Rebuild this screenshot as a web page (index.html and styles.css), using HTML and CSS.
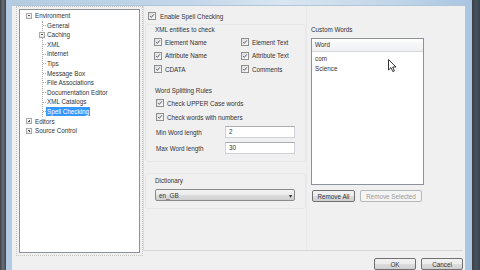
FILE: index.html
```html
<!DOCTYPE html>
<html lang="en">
<head>
    <meta charset="UTF-8">
    <meta name="viewport" content="width=device-width, initial-scale=1.0">
    <title>Options</title>
    <link rel="stylesheet" href="styles.css">
</head>
<body>
    <div class="frame">
        <div class="titlebar"></div>
        <div class="dialog">
            <!-- left tree -->
            <div class="tree">
                <div class="node"><span class="exp minus"></span>Environment</div>
                <div class="children">
                    <div class="leaf">General</div>
                    <div class="leaf branch"><span class="exp minus"></span>Caching</div>
                    <div class="leaf">XML</div>
                    <div class="leaf">Internet</div>
                    <div class="leaf">Tips</div>
                    <div class="leaf">Message Box</div>
                    <div class="leaf">File Associations</div>
                    <div class="leaf">Documentation Editor</div>
                    <div class="leaf">XML Catalogs</div>
                    <div class="leaf last"><span class="selected">Spell Checking</span></div>
                </div>
                <div class="node"><span class="exp plus"></span>Editors</div>
                <div class="node"><span class="exp plus"></span>Source Control</div>
            </div>

            <div class="side">
                <div class="panel">
                    <div class="col-left">
                        <div class="check enable"><span class="cb"><svg viewBox="0 0 8 8"><path d="M1.6 4.1 L3.2 5.8 L6.4 1.8" /></svg></span>Enable Spell Checking</div>

                        <div class="group entities">
                            <div class="legend">XML entities to check</div>
                            <div class="grid">
                                <div class="check"><span class="cb"><svg viewBox="0 0 8 8"><path d="M1.6 4.1 L3.2 5.8 L6.4 1.8" /></svg></span>Element Name</div>
                                <div class="check"><span class="cb"><svg viewBox="0 0 8 8"><path d="M1.6 4.1 L3.2 5.8 L6.4 1.8" /></svg></span>Element Text</div>
                                <div class="check"><span class="cb"><svg viewBox="0 0 8 8"><path d="M1.6 4.1 L3.2 5.8 L6.4 1.8" /></svg></span>Attribute Name</div>
                                <div class="check"><span class="cb"><svg viewBox="0 0 8 8"><path d="M1.6 4.1 L3.2 5.8 L6.4 1.8" /></svg></span>Attribute Text</div>
                                <div class="check"><span class="cb"><svg viewBox="0 0 8 8"><path d="M1.6 4.1 L3.2 5.8 L6.4 1.8" /></svg></span>CDATA</div>
                                <div class="check"><span class="cb"><svg viewBox="0 0 8 8"><path d="M1.6 4.1 L3.2 5.8 L6.4 1.8" /></svg></span>Comments</div>
                            </div>
                            <div class="legend split">Word Splitting Rules</div>
                            <div class="check rule first"><span class="cb"><svg viewBox="0 0 8 8"><path d="M1.6 4.1 L3.2 5.8 L6.4 1.8" /></svg></span>Check UPPER Case words</div>
                            <div class="check rule"><span class="cb"><svg viewBox="0 0 8 8"><path d="M1.6 4.1 L3.2 5.8 L6.4 1.8" /></svg></span>Check words with numbers</div>
                            <div class="field"><span class="label">Min Word length</span><span class="textbox">2</span></div>
                            <div class="field"><span class="label">Max Word length</span><span class="textbox">30</span></div>
                        </div>

                        <div class="group dict">
                            <div class="legend">Dictionary</div>
                            <div class="combo"><span>en_GB</span><span class="arrow">&#9662;</span></div>
                        </div>
                    </div>

                    <div class="col-right">
                        <div class="legend custom">Custom Words</div>
                        <div class="list">
                            <div class="list-head">Word</div>
                            <div class="item first">com</div>
                            <div class="item">Science</div>
                            <svg class="cursor" viewBox="0 0 9 14" width="9" height="14">
                                <path d="M0.5 0.5 L0.5 11 L3 8.6 L4.8 12.6 L6.4 11.9 L4.7 8 L8 8 Z" fill="#fff" stroke="#222" stroke-width="0.9" />
                            </svg>
                        </div>
                        <div class="list-buttons">
                            <span class="btn remove-all">Remove All</span>
                            <span class="btn disabled">Remove Selected</span>
                        </div>
                    </div>
                </div>

                <div class="footer">
                    <span class="btn ok">OK</span>
                    <span class="btn cancel">Cancel</span>
                </div>
            </div>
        </div>
    </div>
</body>
</html>
```

FILE: styles.css
```css
* {
    font-family: 'Liberation Sans', Arial, sans-serif;
    box-sizing: border-box;
}

body {
    margin: 0;
    width: 480px;
    height: 270px;
    overflow: hidden;
    background: linear-gradient(90deg, #3c3f44 0px, #6d7177 3px, #3e4146 6px, #3e4146 472px, #46525f 476px, #3a4450 480px);
    font-size: 6.3px;
    color: #333;
}

.frame {
    margin-left: 6px;
    width: 466px;
    height: 270px;
    display: flex;
    flex-direction: column;
    padding: 0 7px 0 6px;
    background: linear-gradient(90deg, #b3cbe2, #c3d7ea 40%, #d8e6f2 60%, #bfd4e8 85%, #a9c5e2);
}

.titlebar {
    height: 8px;
}

.dialog {
    flex: 1;
    display: flex;
    background: #f0f0f0;
    border-top: 1px solid #b4c5d6;
}

/* tree */

.tree {
    margin: 3px 0 0 7px;
    width: 121px;
    height: 244px;
    background: #fff;
    border: 1px solid #8d9199;
    outline: 1px dotted #c4c4c4;
    outline-offset: 2px;
    padding-top: 1px;
    line-height: 9.6px;
}

.node {
    display: flex;
    align-items: center;
    height: 9.6px;
    padding-left: 6px;
}

.exp {
    position: relative;
    width: 6px;
    height: 6px;
    margin-right: 3px;
    border: 1px solid #a8a8a8;
    background: linear-gradient(#fff, #e6e6e6);
    flex: none;
}

.exp::before {
    content: "";
    position: absolute;
    left: 1px;
    top: 1.5px;
    width: 2px;
    height: 1px;
    background: #555;
}

.exp.plus::after {
    content: "";
    position: absolute;
    left: 1.5px;
    top: 1px;
    width: 1px;
    height: 2px;
    background: #555;
}

.children {
    margin-left: 22px;
    border-left: 1px dotted #a8a8a8;
}

.leaf {
    display: flex;
    align-items: center;
    height: 9.6px;
}

.leaf::before {
    content: "";
    width: 3px;
    margin-right: 1px;
    border-top: 1px dotted #a8a8a8;
}

.leaf.branch::before {
    display: none;
}

.leaf.branch .exp {
    margin-left: -4px;
    margin-right: 2px;
}

.selected {
    background: #3399ff;
    color: #fff;
    padding: 0 1px;
    margin-left: -1px;
    line-height: 9px;
}

/* right side */

.side {
    margin-left: 3px;
    width: 320px;
    display: flex;
    flex-direction: column;
}

.panel {
    height: 245px;
    display: flex;
    border-left: 1px solid #dddddd;
    border-bottom: 1px solid #d6d6d6;
}

.col-left {
    width: 162px;
}

.check {
    display: flex;
    align-items: center;
    height: 10px;
    white-space: nowrap;
}

.cb {
    width: 8px;
    height: 8px;
    margin-right: 3px;
    border: 1px solid #8e8f8f;
    background: linear-gradient(135deg, #dcdcdc, #fafafa);
    flex: none;
}

.cb svg {
    display: block;
    width: 6px;
    height: 6px;
}

.cb path {
    fill: none;
    stroke: #46506a;
    stroke-width: 1.2;
}

.enable {
    margin-top: 5px;
    padding-left: 4px;
}

.enable .cb {
    margin-right: 4px;
}

.group {
    margin-left: 1px;
    width: 161px;
    border: 1px solid #e7e7e7;
    border-radius: 3px;
}

.legend {
    height: 10px;
    line-height: 10px;
    padding-left: 9px;
}

.entities {
    margin-top: 3px;
    padding-bottom: 7px;
}

.grid {
    margin-top: 2px;
    padding-left: 8px;
    display: grid;
    grid-template-columns: 87px 1fr;
    row-gap: 3.5px;
}

.legend.split {
    margin-top: 12px;
}

.rule {
    padding-left: 10px;
    margin-top: 4px;
}

.rule.first {
    margin-top: 2px;
}

.field {
    display: flex;
    align-items: center;
    margin-top: 4px;
    padding-left: 10px;
    height: 12px;
}

.label {
    width: 69px;
}

.textbox {
    width: 70px;
    height: 12px;
    line-height: 10px;
    padding-left: 3px;
    background: #fff;
    border: 1px solid #cfd2d6;
    border-top-color: #abadb3;
}

.dict {
    margin-top: 11px;
    padding: 2px 0 7px;
}

.combo {
    margin: 3px 0 0 9px;
    width: 140px;
    height: 12px;
    display: flex;
    align-items: center;
    justify-content: space-between;
    padding: 0 2px 0 3px;
    border: 1px solid #8a8a8a;
    border-radius: 2px;
    background: linear-gradient(#f3f3f3, #ebebeb 50%, #dddddd 51%, #d0d0d0);
}

.arrow {
    font-size: 6px;
}

.col-right {
    flex: 1;
    padding-left: 4px;
    border-left: 1px solid #e9e9e9;
}

.legend.custom {
    margin-top: 19px;
    padding-left: 0;
}

.list {
    position: relative;
    margin-top: 3px;
    width: 113px;
    height: 147px;
    background: #fff;
    border: 1px solid #8d9199;
}

.list-head {
    height: 13px;
    line-height: 12px;
    padding-left: 3px;
    background: linear-gradient(#fff, #f5f6f7 50%, #eef0f2);
    border-bottom: 1px solid #d8d8d8;
}

.item {
    height: 10px;
    line-height: 10px;
    padding-left: 3px;
}

.item.first {
    margin-top: 2px;
}

.cursor {
    position: absolute;
    left: 76px;
    top: 20px;
}

.list-buttons {
    display: flex;
    margin-top: 5px;
    padding-left: 1px;
    gap: 5px;
}

.btn {
    display: flex;
    align-items: center;
    justify-content: center;
    height: 12px;
    border: 1px solid #707070;
    border-radius: 2px;
    background: linear-gradient(#f2f2f2, #ebebeb 50%, #dddddd 51%, #cfcfcf);
    white-space: nowrap;
}

.remove-all {
    width: 43px;
}

.disabled {
    width: 62px;
    border-color: #b5b8ba;
    background: #f4f4f4;
    color: #9a9a9a;
}

.footer {
    display: flex;
    justify-content: flex-end;
    gap: 5px;
    margin-top: 7px;
}

.ok, .cancel {
    width: 42px;
}
```
